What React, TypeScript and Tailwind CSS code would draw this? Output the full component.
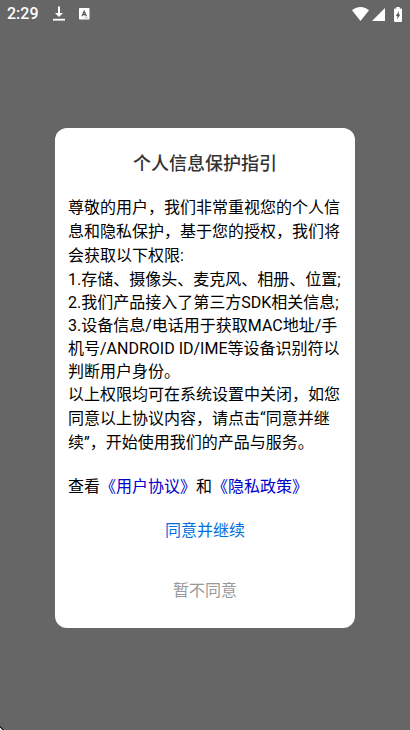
import React from "react";

const SystemBar = () => {
  return (
    <header className="flex h-7 items-center justify-between pl-[7px] pr-2 text-white">
      <div className="flex items-center">
        <time className="text-base font-medium leading-7">2:29</time>
        <svg className="ml-[14px] h-4 w-3" viewBox="0 0 12 16" fill="currentColor" aria-hidden="true">
          <path d="M5 0.5h2V7h3l-4 4-4-4h3z" />
          <path d="M0 12.8h12v1.8H0z" />
        </svg>
        <svg className="ml-[14px] h-3 w-[11px]" viewBox="0 0 11 12" aria-hidden="true">
          <rect width="10.5" height="11.5" rx="0.8" fill="currentColor" />
          <path d="M3 8.3 5.2 3.2 7.4 8.3M3.7 6.7h3" fill="none" stroke="#555" strokeWidth="1.2" />
          <path d="M5.5 9.8h1M7.5 9.8h1" stroke="#777" strokeWidth="0.9" />
        </svg>
      </div>
      <div className="flex items-center">
        <svg className="h-[14px] w-[17px]" viewBox="0 0 17 14" fill="currentColor" aria-hidden="true">
          <path d="M8.5 14 0 3.3C2.2 1.3 5.2 0 8.5 0S14.8 1.3 17 3.3z" />
        </svg>
        <svg className="ml-[3px] h-[13px] w-[13px]" viewBox="0 0 13 13" fill="currentColor" aria-hidden="true">
          <path d="M13 0v13H0z" />
        </svg>
        <svg className="ml-[9px] h-[15px] w-2" viewBox="0 0 8 15" aria-hidden="true">
          <path d="M2.3 0h3.4v1.5H7q1 0 1 1V14q0 1-1 1H1q-1 0-1-1V2.5q0-1 1-1h1.3z" fill="currentColor" />
          <path d="M5 4 1.8 9h1.7L3 12.5 6.3 7.5H4.6z" fill="#555" />
        </svg>
      </div>
    </header>
  );
};

const PrivacyDialog = () => {
  return (
    <section
      role="dialog"
      aria-labelledby="privacy-title"
      className="mx-[55px] rounded-xl bg-white px-[13px] pb-[17px] pt-6 text-base text-black"
    >
      <h1 id="privacy-title" className="text-center text-lg font-medium leading-6 text-[#333]">
        个人信息保护指引
      </h1>

      <div className="mt-5 leading-6">
        <p>尊敬的用户，我们非常重视您的个人信息和隐私保护，基于您的授权，我们将会获取以下权限:</p>
        <div className="leading-[23px]">
          <p>1.存储、摄像头、麦克风、相册、位置;</p>
          <p>2.我们产品接入了第三方SDK相关信息;</p>
          <p>3.设备信息/电话用于获取MAC地址/手机号/ANDROID ID/IME等设备识别符以判断用户身份。</p>
        </div>
        <p>以上权限均可在系统设置中关闭，如您同意以上协议内容，请点击“同意并继续”，开始使用我们的产品与服务。</p>
      </div>

      <p className="mt-5 leading-6">
        查看
        <a href="#agreement" className="text-[#0000c8]">《用户协议》</a>
        和
        <a href="#privacy" className="text-[#0000c8]">《隐私政策》</a>
      </p>

      <div className="mt-3 flex flex-col items-center gap-5">
        <button type="button" className="px-6 py-2 leading-6 text-[#0070df]">
          同意并继续
        </button>
        <button type="button" className="px-6 py-2 leading-6 text-[#999]">
          暂不同意
        </button>
      </div>
    </section>
  );
};

const App = () => {
  return (
    <div
      lang="zh-CN"
      className="relative flex min-h-screen flex-col bg-[#666] font-[Roboto,'Noto_Sans_CJK_SC',sans-serif]"
    >
      <SystemBar />
      <main className="flex flex-1 flex-col justify-center pb-[2px]">
        <PrivacyDialog />
      </main>
      <svg className="absolute bottom-0 left-0 h-1 w-1" viewBox="0 0 4 4" aria-hidden="true">
        <path d="M0 0 4 4H0z" fill="#000" />
        <path d="M0 1.5 2.5 4H0z" fill="#fff" />
      </svg>
    </div>
  );
};

export default App;
